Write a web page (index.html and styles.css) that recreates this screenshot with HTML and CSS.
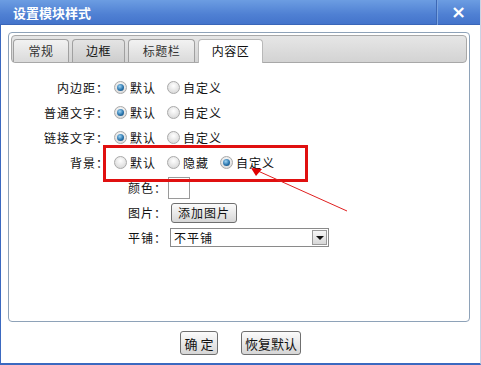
FILE: index.html
```html
<!DOCTYPE html>
<html>
<head>
<meta charset="utf-8">
<link rel="stylesheet" href="styles.css">
</head>
<body>
<div class="dialog">
  <div class="titlebar">
    <span class="title">设置模块样式</span>
    <span class="close">×</span>
  </div>
  <div class="panel">
    <div class="tabbar">
      <span class="tab">常规</span>
      <span class="tab hover">边框</span>
      <span class="tab">标题栏</span>
      <span class="tab active">内容区</span>
    </div>
    <div class="form">
      <div class="row">
        <span class="label">内边距：</span>
        <span class="radio on"></span><span class="opt">默认</span>
        <span class="radio"></span><span class="opt">自定义</span>
      </div>
      <div class="row">
        <span class="label">普通文字：</span>
        <span class="radio on"></span><span class="opt">默认</span>
        <span class="radio"></span><span class="opt">自定义</span>
      </div>
      <div class="row">
        <span class="label">链接文字：</span>
        <span class="radio on"></span><span class="opt">默认</span>
        <span class="radio"></span><span class="opt">自定义</span>
      </div>
      <div class="row">
        <span class="label">背景：</span>
        <span class="radio"></span><span class="opt">默认</span>
        <span class="radio"></span><span class="opt">隐藏</span>
        <span class="radio on"></span><span class="opt">自定义</span>
      </div>
      <div class="row sub">
        <span class="sublabel">颜色：</span>
        <span class="swatch"></span>
      </div>
      <div class="row sub">
        <span class="sublabel">图片：</span>
        <span class="btn small">添加图片</span>
      </div>
      <div class="row sub">
        <span class="sublabel">平铺：</span>
        <span class="select"><span class="value">不平铺</span><span class="drop"></span></span>
      </div>
    </div>
  </div>
  <div class="actions">
    <span class="btn big">确&nbsp;定</span>
    <span class="btn big">恢复默认</span>
  </div>
  <div class="highlight"></div>
  <svg class="arrow" width="481" height="365" viewBox="0 0 481 365">
    <line x1="347" y1="211" x2="258" y2="171" stroke="#e02020" stroke-width="1"/>
    <polygon points="251,168 262,169 256,176" fill="#e00000"/>
  </svg>
</div>
</body>
</html>
```

FILE: styles.css
```css
html, body {
  margin: 0;
  padding: 0;
  background: #fff;
}
body {
  font-family: "Noto Sans CJK SC", "Liberation Sans", sans-serif;
  font-size: 12px;
  color: #111;
}
.dialog {
  position: relative;
  width: 479px;
  height: 363px;
  border-left: 1px solid #3b69c0;
  border-right: 1px solid #c9d3e4;
  border-bottom: 2px solid #3b69c0;
  background: #fff;
  display: flex;
  flex-direction: column;
}
.titlebar {
  height: 25px;
  flex: none;
  display: flex;
  align-items: center;
  justify-content: space-between;
  background: linear-gradient(#6c9de2, #4f80d3 60%, #4474cb);
  border-bottom: 1px solid #3a66b8;
  box-sizing: border-box;
  margin-left: -1px;
}
.title {
  color: #fff;
  font-weight: bold;
  font-size: 13px;
  padding-left: 13px;
  line-height: 25px;
}
.close {
  width: 44px;
  height: 25px;
  line-height: 24px;
  text-align: center;
  color: #fff;
  font-family: "DejaVu Sans", sans-serif;
  font-weight: bold;
  font-size: 18px;
  border-left: 1px solid #3d68b5;
  box-shadow: inset 1px 0 0 #7aa3e0;
  box-sizing: border-box;
}
.panel {
  margin: 7px 0 0 7px;
  width: 462px;
  height: 290px;
  box-sizing: border-box;
  border: 1px solid #8ea2b8;
  border-radius: 4px;
  padding: 2px;
  flex: none;
}
.tabbar {
  height: 28px;
  box-sizing: border-box;
  border: 1px solid #a8a8a8;
  border-radius: 4px;
  background: linear-gradient(#e6e6e6, #d3d3d3);
  display: flex;
  align-items: flex-end;
  padding-left: 1px;
  gap: 3px;
}
.tab {
  height: 23px;
  box-sizing: border-box;
  border: 1px solid #a0a0a0;
  border-bottom: none;
  border-radius: 4px 4px 0 0;
  background: linear-gradient(#f2f2f2, #dadada);
  color: #333;
  font-size: 12px;
  line-height: 22px;
  text-align: center;
  width: 56px;
  letter-spacing: 0.5px;
}
.tab.hover {
  width: 53px;
  background: linear-gradient(#e4e4e4, #cdcdcd);
  color: #111;
}
.tab:nth-child(3) { width: 67px; }
.tab.active {
  width: 65px;
  background: #fff;
  color: #111;
  border-color: #b8b8b8;
  height: 24px;
  margin-bottom: -1px;
}
.form {
  padding-top: 12px;
}
.row {
  height: 25px;
  display: flex;
  align-items: center;
}
.label {
  width: 98px;
  text-align: right;
  letter-spacing: 1px;
}
.radio {
  position: relative;
  width: 13px;
  height: 13px;
  box-sizing: border-box;
  border-radius: 50%;
  border: 1px solid #a9a9a9;
  background: radial-gradient(circle at 50% 35%, #ffffff, #dcdcdc 75%);
  margin-left: 11px;
  margin-right: 3px;
  flex: none;
}
.label + .radio { margin-left: 5px; }
.radio.on::after {
  content: "";
  position: absolute;
  left: 2px;
  top: 2px;
  width: 7px;
  height: 7px;
  border-radius: 50%;
  background: radial-gradient(circle at 40% 35%, #9fd4f4, #2a75ad 55%, #0f3e68);
}
.opt {
  letter-spacing: 1px;
}
.row.sub {
  padding-left: 117px;
}
.sublabel {
  letter-spacing: 1px;
}
.swatch {
  width: 22px;
  height: 22px;
  box-sizing: border-box;
  border: 1px solid #9a9a9a;
  margin-left: 1px;
  background: #fff;
}
.btn {
  display: inline-flex;
  align-items: center;
  justify-content: center;
  box-sizing: border-box;
  border: 1px solid #6f6f6f;
  border-radius: 3px;
  background: linear-gradient(#fbfbfb, #e9e9e9 50%, #d6d6d6);
  color: #111;
  font-size: 12px;
}
.btn.small {
  width: 66px;
  height: 20px;
  margin-left: 4px;
  letter-spacing: 1px;
}
.select {
  margin-left: 3px;
  width: 159px;
  height: 19px;
  box-sizing: border-box;
  border: 1px solid #8a8a8a;
  display: flex;
  align-items: center;
  justify-content: space-between;
  background: #fff;
}
.value {
  padding-left: 3px;
  letter-spacing: 1px;
}
.drop {
  position: relative;
  width: 15px;
  height: 15px;
  margin-right: 1px;
  box-sizing: border-box;
  border: 1px solid #9a9a9a;
  background: linear-gradient(#f6f6f6, #d8d8d8);
}
.drop::after {
  content: "";
  position: absolute;
  left: 3px;
  top: 5px;
  border-left: 4px solid transparent;
  border-right: 4px solid transparent;
  border-top: 4px solid #111;
}
.actions {
  display: flex;
  justify-content: center;
  gap: 23px;
  padding-top: 9px;
}
.btn.big {
  height: 24px;
  font-size: 13px;
}
.btn.big:first-child { width: 38px; }
.btn.big:last-child { width: 60px; }
.highlight {
  position: absolute;
  left: 102px;
  top: 145px;
  width: 205px;
  height: 37px;
  box-sizing: border-box;
  border: 3px solid #e01010;
}
.arrow {
  position: absolute;
  left: -1px;
  top: 0;
  pointer-events: none;
}
```
